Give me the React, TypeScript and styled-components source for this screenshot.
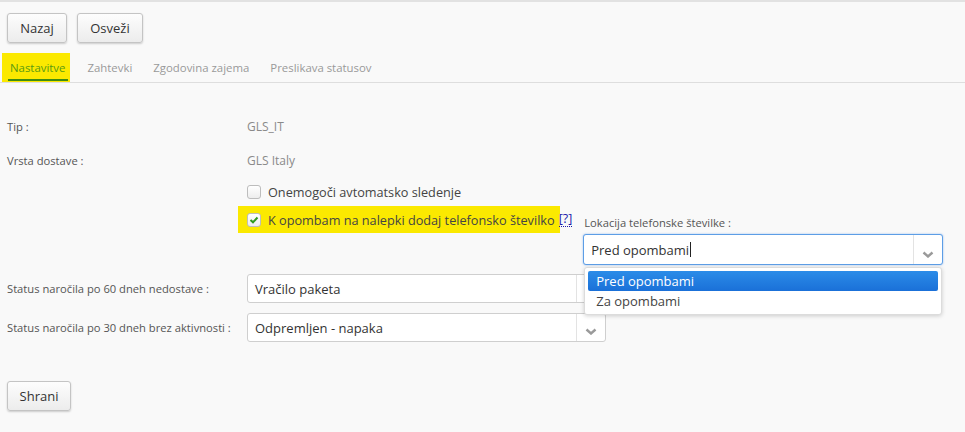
import styled, { createGlobalStyle } from 'styled-components';

/* Global */
const GlobalStyle = createGlobalStyle`
	html, body {
		margin: 0;
		padding: 0;
		background: #f9f9f9;
	}
	body {
		font-family: 'Open Sans', 'Noto Sans', sans-serif;
		color: #333;
		border-top: 2px solid #e2e2e2;
	}
`;

/* Styled Components */
const Page = styled.div`
	width: 965px;
	height: 430px;
	overflow: hidden;
`;

const Toolbar = styled.div`
	display: flex;
	gap: 10px;
	padding: 11px 7px 0;
`;

const Button = styled.button<{ $w: number }>`
	width: ${(p) => p.$w}px;
	height: 30px;
	padding: 0;
	font-family: inherit;
	font-size: 13px;
	color: #333;
	border: 1px solid #c4c4c4;
	border-radius: 3px;
	background: linear-gradient(#fdfdfd, #ececec);
	box-shadow: 0 1px 2px rgba(0, 0, 0, 0.18);
	cursor: pointer;
`;

const Tabs = styled.nav`
	display: flex;
	align-items: stretch;
	height: 29px;
	margin-top: 10px;
	padding-left: 2px;
	border-bottom: 1px solid #dedede;
`;

const Tab = styled.div<{ $active?: boolean }>`
	position: relative;
	display: flex;
	align-items: center;
	padding: ${(p) => (p.$active ? '0 5px 0 8px' : '0 11px')};
	margin-right: ${(p) => (p.$active ? '6px' : '-1px')};
	font-size: 11.4px;
	color: ${(p) => (p.$active ? '#5a9b12' : '#9a9a9a')};
	background: ${(p) => (p.$active ? '#fbe900' : 'transparent')};
	&::after {
		content: '';
		display: ${(p) => (p.$active ? 'block' : 'none')};
		position: absolute;
		left: 6px;
		right: 2px;
		bottom: 1px;
		height: 2px;
		background: #3f8c12;
	}
`;

const Form = styled.div`
	padding: 26px 0 0 7px;
`;

const Row = styled.div<{ $h: number; $top?: boolean }>`
	display: grid;
	grid-template-columns: 240px 1fr;
	align-items: ${(p) => (p.$top ? 'start' : 'center')};
	min-height: ${(p) => p.$h}px;
`;

const Label = styled.span`
	font-size: 11.2px;
	color: #555;
`;

const Value = styled.span`
	font-size: 12px;
	color: #8a8a8a;
`;

const CheckRow = styled.div`
	display: flex;
	align-items: flex-start;
`;

const Mark = styled.div<{ $on?: boolean }>`
	display: flex;
	align-items: center;
	height: 27px;
	padding: 0 ${(p) => (p.$on ? '5px' : '0')} 0 ${(p) => (p.$on ? '9px' : '0')};
	margin-left: ${(p) => (p.$on ? '-9px' : '0')};
	background: ${(p) => (p.$on ? '#fbe900' : 'transparent')};
`;

const Box = styled.span`
	display: inline-flex;
	align-items: center;
	justify-content: center;
	width: 14px;
	height: 14px;
	box-sizing: border-box;
	margin-right: 7px;
	border: 1px solid #bdbdbd;
	border-radius: 3px;
	background: linear-gradient(#ffffff, #ededed);
`;

const CheckText = styled.span`
	font-size: 12.7px;
	color: #444;
`;

const Help = styled.span`
	margin: 6px 0 0 -1px;
	font-size: 12.5px;
	color: #1c1caa;
	border-bottom: 1px dotted #1c1caa;
	line-height: 14px;
`;

const Side = styled.div`
	position: relative;
	display: flex;
	flex-direction: column;
	margin: 9px 0 0 11px;
`;

const SideLabel = styled.span`
	font-size: 11.2px;
	line-height: 15px;
	color: #555;
	margin: 0 0 4px 1px;
`;

const Select = styled.div<{ $w: number; $focus?: boolean }>`
	position: relative;
	display: flex;
	align-items: stretch;
	width: ${(p) => p.$w}px;
	height: ${(p) => (p.$focus ? 31 : 29)}px;
	box-sizing: border-box;
	border: 1px solid ${(p) => (p.$focus ? '#5d9ee6' : '#cfcfcf')};
	border-radius: 3px;
	background: #fff;
	box-shadow: ${(p) => (p.$focus ? '0 0 2px rgba(70, 140, 230, 0.6)' : 'none')};
`;

const SelectText = styled.span`
	flex: 1;
	display: flex;
	align-items: center;
	padding-left: 7px;
	font-size: 13px;
	color: #333;
`;

const Caret = styled.span`
	display: inline-block;
	width: 1px;
	height: 15px;
	margin-left: 1px;
	background: #222;
`;

const Arrow = styled.span`
	display: flex;
	align-items: flex-end;
	justify-content: center;
	width: 29px;
	padding-bottom: 6px;
	box-sizing: border-box;
	border-left: 1px solid #e3e3e3;
`;

const Menu = styled.ul`
	position: absolute;
	top: calc(100% + 3px);
	left: 0;
	right: 0;
	margin: 0;
	padding: 3px;
	list-style: none;
	background: #fff;
	border: 1px solid #dcdcdc;
	border-radius: 3px;
	box-shadow: 0 1px 4px rgba(0, 0, 0, 0.18);
	z-index: 2;
`;

const Option = styled.li<{ $active?: boolean }>`
	height: 20px;
	line-height: 20px;
	padding-left: 8px;
	font-size: 13px;
	border-radius: 2px;
	color: ${(p) => (p.$active ? '#fff' : '#444')};
	background: ${(p) => (p.$active ? 'linear-gradient(#2b8ce8, #1a70d8)' : 'transparent')};
`;

const StatusRows = styled.div`
	display: flex;
	flex-direction: column;
	gap: 10px;
	margin-top: 9px;
`;

const Footer = styled.div`
	padding: 39px 7px 0;
`;

const Chevron = () => (
	<svg width="12" height="7" viewBox="0 0 12 7">
		<path d="M1.5 1.5 L6 5.5 L10.5 1.5" fill="none" stroke="#9a9a9a" strokeWidth="2.4" />
	</svg>
);

const Tick = () => (
	<svg width="10" height="8" viewBox="0 0 10 8">
		<path d="M1.5 4 L4 6.3 L8.5 1.5" fill="none" stroke="#2f9a1d" strokeWidth="2" />
	</svg>
);

const tabs = ['Nastavitve', 'Zahtevki', 'Zgodovina zajema', 'Preslikava statusov'];

export default function App() {
	return (
		<Page>
			<GlobalStyle />
			<Toolbar>
				<Button $w={60}>Nazaj</Button>
				<Button $w={66}>Osveži</Button>
			</Toolbar>
			<Tabs>
				{tabs.map((name, i) => (
					<Tab key={name} $active={i === 0}>
						{name}
					</Tab>
				))}
			</Tabs>
			<Form>
				<Row $h={34}>
					<Label>Tip :</Label>
					<Value>GLS_IT</Value>
				</Row>
				<Row $h={35}>
					<Label>Vrsta dostave :</Label>
					<Value>GLS Italy</Value>
				</Row>
				<Row $h={28}>
					<span />
					<Mark>
						<Box />
						<CheckText>Onemogoči avtomatsko sledenje</CheckText>
					</Mark>
				</Row>
				<Row $h={59} $top>
					<span />
					<CheckRow>
						<Mark $on>
							<Box>
								<Tick />
							</Box>
							<CheckText>K opombam na nalepki dodaj telefonsko številko</CheckText>
						</Mark>
						<Help>[?]</Help>
						<Side>
							<SideLabel>Lokacija telefonske številke :</SideLabel>
							<Select $w={360} $focus>
								<SelectText>
									Pred opombami
									<Caret />
								</SelectText>
								<Arrow>
									<Chevron />
								</Arrow>
								<Menu>
									<Option $active>Pred opombami</Option>
									<Option>Za opombami</Option>
								</Menu>
							</Select>
						</Side>
					</CheckRow>
				</Row>
				<StatusRows>
					<Row $h={29}>
						<Label>Status naročila po 60 dneh nedostave :</Label>
						<Select $w={359}>
							<SelectText>Vračilo paketa</SelectText>
							<Arrow>
								<Chevron />
							</Arrow>
						</Select>
					</Row>
					<Row $h={29}>
						<Label>Status naročila po 30 dneh brez aktivnosti :</Label>
						<Select $w={359}>
							<SelectText>Odpremljen - napaka</SelectText>
							<Arrow>
								<Chevron />
							</Arrow>
						</Select>
					</Row>
				</StatusRows>
			</Form>
			<Footer>
				<Button $w={64}>Shrani</Button>
			</Footer>
		</Page>
	);
}
